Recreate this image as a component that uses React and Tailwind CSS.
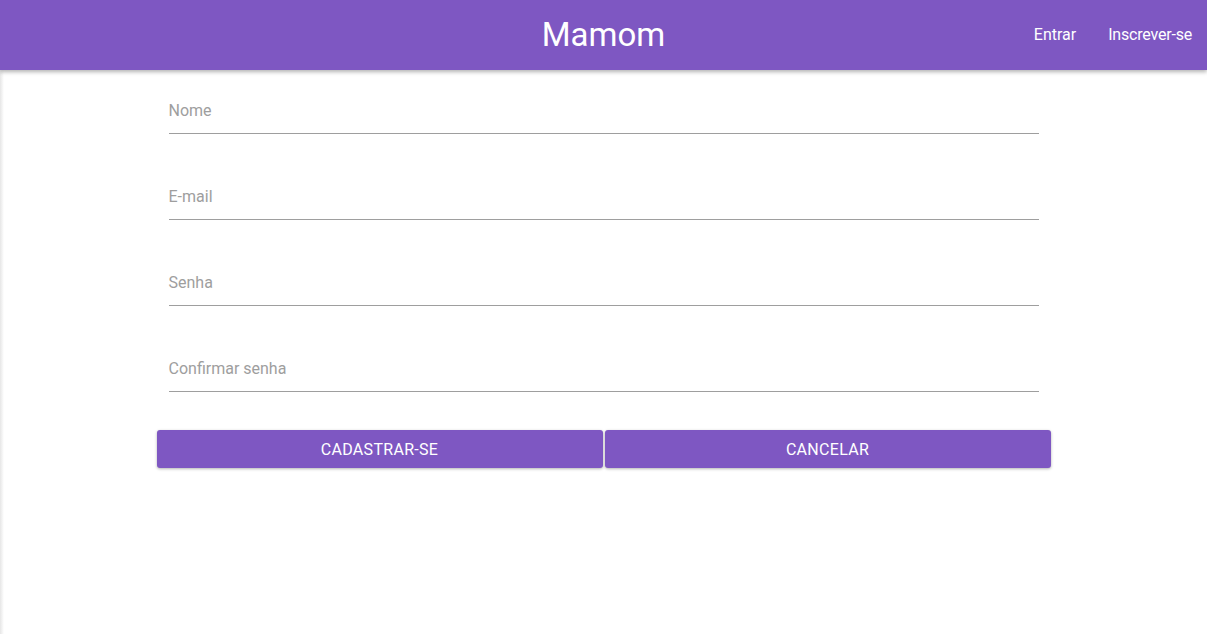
export default function App() {
  const fields = ["Nome", "E-mail", "Senha", "Confirmar senha"];
  return (
    <div className="min-h-[634px] bg-white relative" style={{ fontFamily: "Roboto, 'Liberation Sans', sans-serif" }}>
      <div className="absolute left-0 top-0 bottom-0 w-[4px] bg-gradient-to-r from-[#e6e6e6] to-white" />
      <header className="relative z-10 h-[70px] bg-[#7e57c2] grid grid-cols-[1fr_auto_1fr] items-center shadow-[0_2px_4px_rgba(0,0,0,0.3)]">
        <div />
        <div className="text-white text-[33px] leading-none -mt-[2px]">Mamom</div>
        <div className="flex justify-end items-center gap-[32px] pr-[15px] text-white text-[16px]">
          <span>Entrar</span>
          <span className="tracking-[-0.2px]">Inscrever-se</span>
        </div>
      </header>
      <main className="relative w-[894px] mx-auto pt-[32px]">
        <div className="px-[12px] flex flex-col gap-[54px]">
          {fields.map((f) => (
            <div key={f} className="flex flex-col">
              <div className="text-[16px] text-[#9e9e9e] pb-[13px] leading-[18px]">{f}</div>
              <div className="h-px bg-[#9e9e9e]" />
            </div>
          ))}
        </div>
        <div className="flex gap-[2px] mt-[38px]">
          <button className="flex-1 h-[38px] pt-[1px] bg-[#7e57c2] text-white text-[16px] rounded-[3px] shadow-[0_1px_3px_rgba(0,0,0,0.3)] uppercase tracking-[0.3px]">Cadastrar-se</button>
          <button className="flex-1 h-[38px] pt-[1px] bg-[#7e57c2] text-white text-[16px] rounded-[3px] shadow-[0_1px_3px_rgba(0,0,0,0.3)] uppercase tracking-[0.3px]">Cancelar</button>
        </div>
      </main>
    </div>
  );
}
